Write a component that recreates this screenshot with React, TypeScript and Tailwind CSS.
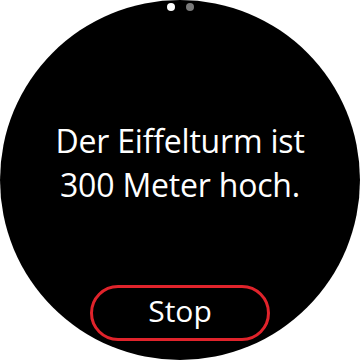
export default function App() {
  return (
    <div className="w-[360px] h-[360px] bg-white overflow-hidden">
      <div className="relative w-[360px] h-[360px] rounded-full bg-black overflow-hidden flex flex-col items-center text-white font-['Open_Sans',sans-serif]">
        {/* page dots */}
        <div className="flex gap-[11px] mt-[3px]">
          <span className="w-[8px] h-[8px] rounded-full bg-white" />
          <span className="w-[8px] h-[8px] rounded-full bg-[#7a7a7a]" />
        </div>

        <p className="mt-[108px] text-[32px] leading-[44px] text-center tracking-[-0.2px]">
          Der Eiffelturm ist
          <br />
          300 Meter hoch.
        </p>

        <button className="mt-[78px] w-[180px] h-[56px] shrink-0 rounded-full border-[3px] border-[#e0232b] text-[30px] leading-none pb-[4px]">
          Stop
        </button>
      </div>
    </div>
  );
}
